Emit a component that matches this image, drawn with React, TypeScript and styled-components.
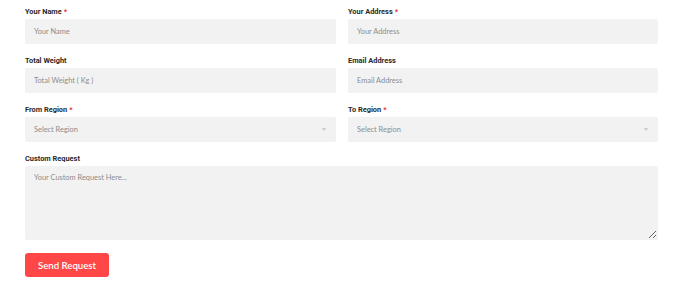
import React from "react";
import styled, { createGlobalStyle } from "styled-components";

const Global = createGlobalStyle`
  html, body { margin: 0; padding: 0; background: #ffffff; }
  * { box-sizing: border-box; }
`;

const Page = styled.form`
  width: 683px;
  padding: 6px 25px 0 25px;
  font-family: "Lato", "Open Sans", sans-serif;
`;

const Grid = styled.div`
  display: grid;
  grid-template-columns: 311px 310px;
  column-gap: 12px;
  row-gap: 11px;
`;

const Field = styled.div<{ $wide?: boolean }>`
  display: flex;
  flex-direction: column;
  grid-column: ${(p) => (p.$wide ? "1 / -1" : "auto")};
`;

const Label = styled.label`
  font-family: "Roboto", "Liberation Sans", sans-serif;
  font-weight: 700;
  font-size: 7.4px;
  line-height: 11px;
  color: #2a2a2a;
  margin-bottom: 2px;
`;

const Req = styled.span`
  color: #e8363a;
  margin-left: 2px;
`;

const fieldBase = `
  display: block;
  width: 100%;
  border: 1px solid #f2f2f2;
  background: #f2f2f2;
  border-radius: 2px;
  font-family: "Lato", "Open Sans", sans-serif;
  font-size: 7.4px;
  color: #777777;
  padding: 0 8px;
  outline: none;
  margin: 0;
  &::placeholder { color: #8c8c8c; opacity: 1; }
`;

const Input = styled.input`
  ${fieldBase}
  height: 25px;
`;

const SelectWrap = styled.div`
  position: relative;
  width: 100%;
  height: 25px;
`;

const Select = styled.select`
  ${fieldBase}
  height: 25px;
  appearance: none;
  -webkit-appearance: none;
  color: #8c8c8c;
`;

const Caret = styled.svg`
  position: absolute;
  right: 10px;
  top: 11px;
  width: 4px;
  height: 3px;
  pointer-events: none;
`;

const TextArea = styled.textarea`
  ${fieldBase}
  height: 74px;
  padding: 6px 8px;
  resize: vertical;
`;

const Button = styled.button`
  display: block;
  margin-top: 13px;
  width: 84px;
  height: 24px;
  border: none;
  border-radius: 3px;
  background: #ff4747;
  color: #ffffff;
  font-family: "Lato", "Open Sans", sans-serif;
  font-weight: 600;
  font-size: 9.6px;
  padding: 0;
  cursor: pointer;
`;

function RegionSelect({ id }: { id: string }) {
  return (
    <SelectWrap>
      <Select id={id} defaultValue="">
        <option value="">Select Region</option>
      </Select>
      <Caret viewBox="0 0 4 3">
        <path d="M0 0 L4 0 L2 3 Z" fill="#c9c9c9" />
      </Caret>
    </SelectWrap>
  );
}

export default function App() {
  return (
    <>
      <Global />
      <Page onSubmit={(e) => e.preventDefault()}>
        <Grid>
          <Field>
            <Label htmlFor="name">
              Your Name<Req>*</Req>
            </Label>
            <Input id="name" placeholder="Your Name" />
          </Field>
          <Field>
            <Label htmlFor="address">
              Your Address<Req>*</Req>
            </Label>
            <Input id="address" placeholder="Your Address" />
          </Field>
          <Field>
            <Label htmlFor="weight">Total Weight</Label>
            <Input id="weight" placeholder="Total Weight ( Kg )" />
          </Field>
          <Field>
            <Label htmlFor="email">Email Address</Label>
            <Input id="email" placeholder="Email Address" />
          </Field>
          <Field>
            <Label htmlFor="from">
              From Region<Req>*</Req>
            </Label>
            <RegionSelect id="from" />
          </Field>
          <Field>
            <Label htmlFor="to">
              To Region<Req>*</Req>
            </Label>
            <RegionSelect id="to" />
          </Field>
          <Field $wide>
            <Label htmlFor="custom">Custom Request</Label>
            <TextArea id="custom" placeholder="Your Custom Request Here..." />
          </Field>
        </Grid>
        <Button type="submit">Send Request</Button>
      </Page>
    </>
  );
}
